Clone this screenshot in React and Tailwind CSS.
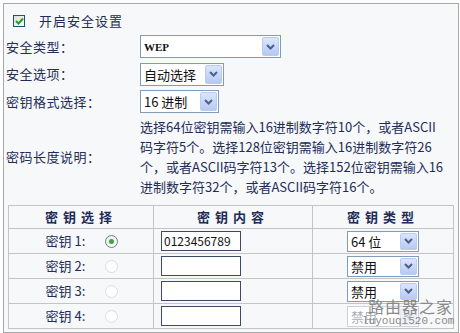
import React from 'react';

const font = { fontFamily: '"Noto Sans CJK SC", "Liberation Sans", sans-serif' };

function Arrow({ disabled }) {
  return (
    <span
      className={`ml-auto mr-[1px] flex h-[calc(100%-2px)] w-[17px] items-center justify-center rounded-[2px] border ${
        disabled ? 'border-[#e2e6ee] bg-[#eef1f6]' : 'border-[#b9ccf0] bg-gradient-to-b from-[#dbe6fd] to-[#b6c9f4]'
      }`}
    >
      <svg width="9" height="6" viewBox="0 0 9 6">
        <path d="M1 1 L4.5 4.5 L8 1" fill="none" stroke={disabled ? '#c6cbd6' : '#4d6185'} strokeWidth="2" />
      </svg>
    </span>
  );
}

function Select({ children, className, disabled, textClass = '' }) {
  return (
    <div
      className={`flex items-center border bg-white pl-[3px] ${
        disabled ? 'border-[#c9d2de]' : 'border-[#7f9db9]'
      } ${className}`}
    >
      <span className={`whitespace-nowrap leading-none ${disabled ? 'text-[#a9adb5]' : 'text-[#111]'} ${textClass}`}>
        {children}
      </span>
      <Arrow disabled={disabled} />
    </div>
  );
}

function Radio({ checked }) {
  if (checked) {
    return (
      <span className="flex h-[13px] w-[13px] items-center justify-center rounded-full border border-[#6b7f95] bg-gradient-to-br from-[#e6e8ea] to-white">
        <span className="h-[5px] w-[5px] rounded-full bg-[#3ba73b]" />
      </span>
    );
  }
  return <span className="h-[13px] w-[13px] rounded-full border border-[#d9dde2] bg-white" />;
}

const keyRows = [
  { n: 1, value: '0123456789', type: '64 位', checked: true },
  { n: 2, value: '', type: '禁用' },
  { n: 3, value: '', type: '禁用' },
  { n: 4, value: '', type: '禁用', disabled: true },
];

export default function App() {
  return (
    <div className="relative h-[333px] w-[460px] overflow-hidden bg-white text-[13px] text-[#232c58]" style={font}>
      <div className="ml-[3px] mt-[3px] h-[330px] w-[456px] border border-[#a9a9a9] bg-[#f6f8f9] pt-[5px]">
        {/* 开启安全设置 */}
        <div className="flex h-[24px] items-center pl-[9px]">
          <span className="flex h-[12px] w-[12px] items-center justify-center border border-[#1c5180] bg-gradient-to-br from-[#dcdcd6] to-white">
            <svg width="9" height="8" viewBox="0 0 9 8">
              <path d="M1 4 L3.5 6.5 L8 1.5" fill="none" stroke="#21a121" strokeWidth="2" />
            </svg>
          </span>
          <span className="ml-[14px] tracking-[1px]">开启安全设置</span>
        </div>

        <div className="flex h-[27px] items-center pl-[2px]">
          <span className="w-[134px] tracking-[0.5px]">安全类型：</span>
          <Select className="h-[23px] w-[141px]" textClass="text-[11px] font-bold">
            <span style={{ fontFamily: '"Liberation Serif", serif' }}>WEP</span>
          </Select>
        </div>

        <div className="flex h-[28px] items-center pl-[2px]">
          <span className="w-[134px] tracking-[0.5px]">安全选项：</span>
          <Select className="h-[23px] w-[84px]">自动选择</Select>
        </div>

        <div className="flex h-[27px] items-center pl-[2px]">
          <span className="w-[134px] tracking-[0.5px]">密钥格式选择：</span>
          <Select className="h-[23px] w-[79px]">16 进制</Select>
        </div>

        <div className="mt-[2px] flex items-center pl-[2px]">
          <span className="w-[134px] tracking-[0.5px]">密码长度说明：</span>
          <div className="text-[13px] leading-[20px]">
            <div className="whitespace-nowrap">选择64位密钥需输入16进制数字符10个，或者ASCII</div>
            <div className="whitespace-nowrap">码字符5个。选择128位密钥需输入16进制数字符26</div>
            <div className="whitespace-nowrap">个，或者ASCII码字符13个。选择152位密钥需输入16</div>
            <div className="whitespace-nowrap">进制数字符32个，或者ASCII码字符16个。</div>
          </div>
        </div>

        <table className="ml-[4px] mt-[8px] w-[446px] border-collapse border border-[#c4c4c4]">
          <thead>
            <tr className="h-[23px]">
              <th className="w-[145px] border border-[#c4c4c4] font-semibold tracking-[5px]">密钥选择</th>
              <th className="w-[159px] border border-[#c4c4c4] font-semibold tracking-[5px]">密钥内容</th>
              <th className="border border-[#c4c4c4] font-semibold tracking-[5px]">密钥类型</th>
            </tr>
          </thead>
          <tbody>
            {keyRows.map((r) => (
              <tr key={r.n} className="h-[25px]">
                <td className="border border-[#c4c4c4]">
                  <div className="flex items-center justify-center gap-[20px] pl-[2px]">
                    <span className="whitespace-nowrap">密钥 {r.n}:</span>
                    <Radio checked={r.checked} />
                  </div>
                </td>
                <td className="border border-[#c4c4c4] pl-[7px]">
                  <div className="flex h-[20px] w-[80px] items-center border border-[#3c4a66] bg-white pl-[2px] text-[12px] text-[#111]">
                    {r.value}
                  </div>
                </td>
                <td className="border border-[#c4c4c4]">
                  <div className="flex justify-center">
                    <Select className="h-[21px] w-[72px]" disabled={r.disabled}>
                      {r.type}
                    </Select>
                  </div>
                </td>
              </tr>
            ))}
          </tbody>
        </table>
      </div>

      {/* watermark */}
      <div className="pointer-events-none absolute left-[362px] top-[298px] leading-none text-[#8a8a8a]">
        <div className="pl-[6px] text-[16px] tracking-[1px]">路由器之家</div>
        <div className="mt-[2px] text-[11px]" style={{ fontFamily: '"Liberation Mono", monospace' }}>
          luyouqi520.com
        </div>
      </div>
    </div>
  );
}
